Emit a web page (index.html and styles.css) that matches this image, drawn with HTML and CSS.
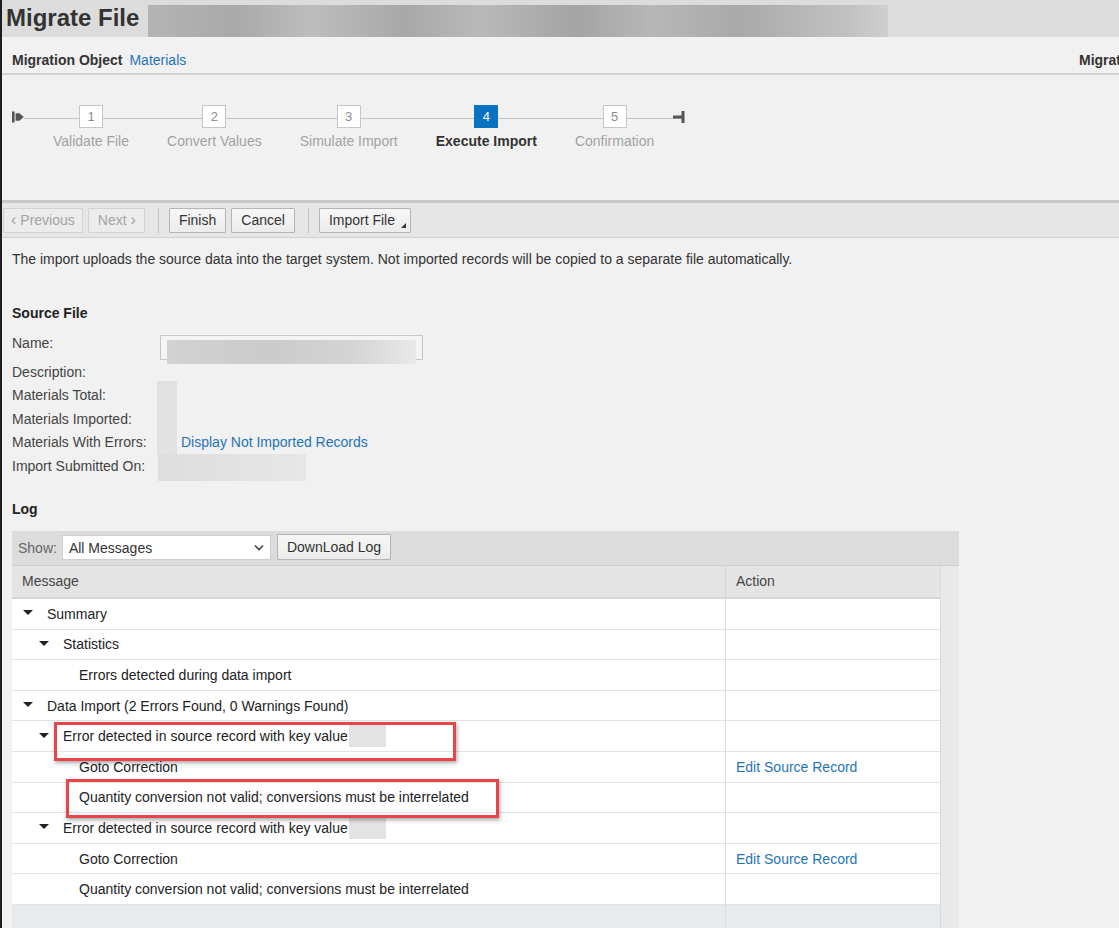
FILE: index.html
```html
<!DOCTYPE html>
<html>
<head>
<meta charset="utf-8">
<title>Migrate File</title>
<link rel="stylesheet" href="styles.css">
</head>
<body>
<div class="page">
  <header class="titlebar">
    <h1 class="title">Migrate File</h1>
    <div class="blur-title"></div>
  </header>
  <div class="objbar">
    <div class="obj-left"><span class="obj-label">Migration Object</span><a class="link">Materials</a></div>
    <span class="obj-right">Migrat</span>
  </div>

  <div class="roadmap">
    <div class="track">
      <span class="rm-start">
        <svg width="12" height="12" viewBox="0 0 12 12"><rect x="0" y="0.5" width="2.6" height="11" fill="#555"/><path d="M3.6 2.2 H7.4 L11.8 6 L7.4 9.8 H3.6 Z" fill="#555"/></svg>
      </span>
      <div class="step"><div class="box">1</div><div class="lbl">Validate File</div></div>
      <div class="step"><div class="box">2</div><div class="lbl">Convert Values</div></div>
      <div class="step"><div class="box">3</div><div class="lbl">Simulate Import</div></div>
      <div class="step active"><div class="box">4</div><div class="lbl">Execute Import</div></div>
      <div class="step"><div class="box">5</div><div class="lbl">Confirmation</div></div>
      <span class="rm-end">
        <svg width="12" height="14" viewBox="0 0 12 14"><rect x="0" y="5.5" width="9" height="3" fill="#555"/><rect x="8.5" y="1" width="3" height="12" fill="#555"/></svg>
      </span>
    </div>
  </div>

  <div class="toolbar">
    <button class="btn disabled"><span class="chev">&#8249;</span> Previous</button>
    <button class="btn disabled next">Next <span class="chev">&#8250;</span></button>
    <span class="sep"></span>
    <button class="btn">Finish</button>
    <button class="btn">Cancel</button>
    <span class="sep"></span>
    <button class="btn menu">Import File<span class="menu-tri"></span></button>
  </div>

  <main class="content">
    <p class="intro">The import uploads the source data into the target system. Not imported records will be copied to a separate file automatically.</p>

    <h2 class="section">Source File</h2>
    <div class="form">
      <div class="f-label name-l">Name:</div>
      <div class="f-val"><div class="input-blur"><span class="inner-blur"></span></div></div>
      <div class="f-label">Description:</div>
      <div class="f-val"><span class="vblur top"></span></div>
      <div class="f-label">Materials Total:</div>
      <div class="f-val"><span class="vblur"></span></div>
      <div class="f-label">Materials Imported:</div>
      <div class="f-val"><span class="vblur"></span></div>
      <div class="f-label">Materials With Errors:</div>
      <div class="f-val"><span class="vblur"></span><a class="link records">Display Not Imported Records</a></div>
      <div class="f-label">Import Submitted On:</div>
      <div class="f-val"><span class="wide-blur"></span></div>
    </div>

    <h2 class="section log-h">Log</h2>
    <div class="logpanel">
      <div class="logbar">
        <span class="show">Show:</span>
        <div class="select"><span>All Messages</span>
          <svg width="10" height="7" viewBox="0 0 10 7"><path d="M1 1.5 L5 5.5 L9 1.5" stroke="#444" stroke-width="1.6" fill="none"/></svg>
        </div>
        <button class="btn dl">DownLoad Log</button>
      </div>
      <div class="tablewrap">
        <div class="table">
          <div class="thead"><div class="c1">Message</div><div class="c2">Action</div></div>
          <div class="tbody">
            <div class="row"><div class="c1 l0"><span class="tri"></span>Summary</div><div class="c2"></div></div>
            <div class="row"><div class="c1 l1"><span class="tri"></span>Statistics</div><div class="c2"></div></div>
            <div class="row"><div class="c1 l2">Errors detected during data import</div><div class="c2"></div></div>
            <div class="row"><div class="c1 l0"><span class="tri"></span>Data Import (2 Errors Found, 0 Warnings Found)</div><div class="c2"></div></div>
            <div class="row"><div class="c1 l1"><span class="tri"></span>Error detected in source record with key value<span class="keyblur"></span></div><div class="c2"></div></div>
            <div class="row"><div class="c1 l2">Goto Correction</div><div class="c2"><a class="link">Edit Source Record</a></div></div>
            <div class="row"><div class="c1 l2">Quantity conversion not valid; conversions must be interrelated</div><div class="c2"></div></div>
            <div class="row"><div class="c1 l1"><span class="tri"></span>Error detected in source record with key value<span class="keyblur"></span></div><div class="c2"></div></div>
            <div class="row"><div class="c1 l2">Goto Correction</div><div class="c2"><a class="link">Edit Source Record</a></div></div>
            <div class="row"><div class="c1 l2">Quantity conversion not valid; conversions must be interrelated</div><div class="c2"></div></div>
            <div class="row empty"><div class="c1"></div><div class="c2"></div></div>
            <div class="hl hl1"></div>
            <div class="hl hl2"></div>
          </div>
        </div>
        <div class="vscroll"></div>
      </div>
    </div>
  </main>
</div>
</body>
</html>
```

FILE: styles.css
```css
* { box-sizing: border-box; }
html, body { margin: 0; padding: 0; }
body {
  font-family: "Liberation Sans", Arial, sans-serif;
  font-size: 14px;
  color: #333;
  background: #f0f0f0;
  overflow: hidden;
}
.page {
  border-left: 2px solid #1e1e1e;
  min-height: 928px;
  background: #f1f1f1;
}
.link { color: #1f74b8; text-decoration: none; }

/* title */
.titlebar {
  height: 37px;
  background: #dcdcdc;
  display: flex;
  align-items: flex-end;
}
.title {
  margin: 0 0 5px 4px;
  font-size: 24px;
  font-weight: bold;
  color: #333;
  line-height: 28px;
}
.blur-title {
  margin-left: 9px;
  width: 740px;
  height: 32px;
  background: linear-gradient(90deg, #b4b4b4 0%, #a9a9a9 12%, #bdbdbd 22%, #a8a8a8 35%, #b9b9b9 45%, #a4a4a4 58%, #b7b7b7 68%, #a9a9a9 80%, #c2c2c2 95%, #cfcfcf 100%);
}
.objbar {
  height: 38px;
  display: grid;
  grid-template-columns: 1fr auto;
  align-items: start;
  padding: 15px 0 0 10px;
  border-bottom: 2px solid #d3d3d3;
  overflow: hidden;
  line-height: 16px;
}
.obj-left { display: flex; gap: 7px; align-items: center; }
.obj-label, .obj-right { font-weight: bold; color: #333; }
.obj-right { margin-right: -2px; }

/* roadmap */
.roadmap {
  height: 128px;
  padding: 30px 0 0 10px;
  border-bottom: 3px solid #c9c9c9;
}
.track {
  display: inline-flex;
  align-items: flex-start;
  background: linear-gradient(#c4c4c4, #c4c4c4) no-repeat 0 13px / 100% 1px;
}
.rm-start { width: 12px; height: 23px; margin-right: 10px; display: flex; align-items: center; background: #f1f1f1; }
.rm-end { width: 12px; height: 23px; display: flex; align-items: center; }
.step {
  padding: 0 19px;
  display: flex;
  flex-direction: column;
  align-items: center;
}
.box {
  width: 24px;
  height: 23px;
  background: #fff;
  border: 1px solid #c6c6c6;
  color: #8c8c8c;
  font-size: 13px;
  display: flex;
  align-items: center;
  justify-content: center;
}
.lbl { margin-top: 5px; line-height: 16px; color: #a2a2a2; white-space: nowrap; }
.step.active .box { background: #0a72c0; border-color: #0a72c0; color: #fff; }
.step.active .lbl { color: #333; font-weight: bold; }

/* toolbar */
.toolbar {
  height: 35px;
  background: #e6e6e6;
  border-bottom: 1px solid #d0d0d0;
  display: flex;
  align-items: center;
  padding-left: 1px;
}
.btn {
  font-family: inherit;
  font-size: 14px;
  color: #333;
  height: 25px;
  padding: 0 9px;
  background: linear-gradient(#f6f6f6, #ececec);
  border: 1px solid #b5b5b5;
  border-radius: 1px;
  margin-right: 5px;
  display: inline-flex;
  align-items: center;
  gap: 4px;
}
.btn.disabled { color: #a3a3a3; border-color: #d2d2d2; background: #ececec; padding: 0 7px; }
.btn.disabled.next { padding: 0 8px 0 9px; }
.chev { font-size: 16px; line-height: 14px; }
.sep { width: 1px; height: 25px; background: #c4c4c4; margin: 0 10px 0 8px; }
.btn.menu { position: relative; padding-right: 15px; }
.menu-tri {
  position: absolute;
  right: 4px;
  bottom: 4px;
  width: 0; height: 0;
  border-left: 5px solid transparent;
  border-bottom: 5px solid #333;
}

/* content */
.content { padding-left: 10px; }
.intro { margin: 13px 0 0; line-height: 16px; color: #333; }
.section { font-size: 14px; font-weight: bold; color: #222; margin: 38px 0 0; line-height: 16px; }
.form {
  margin-top: 14px;
  display: grid;
  grid-template-columns: 145px 1fr;
  grid-template-rows: 26px repeat(5, 23.4px);
}
.f-label { color: #444; line-height: 23px; white-space: nowrap; }
.f-label.name-l { line-height: 16px; }
.f-val { display: flex; align-items: stretch; position: relative; }
.input-blur {
  margin-left: 3px;
  width: 263px;
  height: 25px;
  border: 1px solid #c6c6c6;
  background: #f4f4f4;
  padding: 4px 6px 0 6px;
}
.inner-blur {
  display: block;
  height: 24px;
  background: linear-gradient(90deg, #d2d2d2, #cbcbcb 40%, #d4d4d4 75%, #e9e9e9);
}
.vblur { width: 20px; background: #e2e2e2; }
.vblur.top { margin-top: 20px; }
.records { margin-left: 4px; line-height: 23px; }
.wide-blur { margin-left: 1px; width: 148px; height: 27px; background: linear-gradient(90deg, #dedede, #e2e2e2 50%, #e7e7e7); margin-top: -1px; }
.log-h { margin-top: 23px; line-height: 16px; }

/* log */
.logpanel { margin-top: 14px; width: 947px; background: #dcdcdc; }
.logbar {
  height: 35px;
  display: flex;
  align-items: center;
  padding-left: 6px;
  border-bottom: 1px solid #cfcfcf;
}
.show { color: #666; margin-right: 5px; }
.select {
  width: 209px;
  height: 25px;
  background: #fff;
  border: 1px solid #cfcfcf;
  display: flex;
  align-items: center;
  justify-content: space-between;
  padding: 0 6px 0 6px;
  color: #333;
  margin-right: 6px;
}
.btn.dl { height: 26px; padding: 0 9px; margin-top: -1px; }
.tablewrap { display: flex; background: #f1f1f1; }
.table { width: 928px; }
.vscroll { width: 19px; background: #e9e9e9; border-left: 1px solid #dadada; }
.thead {
  display: grid;
  grid-template-columns: 714px 1fr;
  height: 33px;
  background: #e4e4e4;
  border-bottom: 2px solid #d6d6d6;
  color: #444;
}
.thead .c1, .thead .c2 { padding-left: 10px; display: flex; align-items: center; }
.thead .c1 { border-right: 1px solid #d4d4d4; }
.tbody { position: relative; }
.row {
  display: grid;
  grid-template-columns: 714px 1fr;
  height: 30.6px;
  background: #fff;
  border-bottom: 1px solid #e3e3e3;
  color: #222;
}
.row .c1 { border-right: 1px solid #dcdcdc; display: flex; align-items: center; white-space: nowrap; }
.row .c2 { display: flex; align-items: center; padding-left: 10px; }
.row.empty { background: #e8ebee; height: 30px; border-bottom: none; }
.l0 { padding-left: 11px; }
.l1 { padding-left: 27px; }
.l2 { padding-left: 67px; }
.tri {
  width: 0; height: 0;
  border-left: 5px solid transparent;
  border-right: 5px solid transparent;
  border-top: 5px solid #222;
  margin-right: 14px;
  margin-top: -2px;
}
.keyblur { display: inline-block; width: 37px; height: 22px; background: #e3e3e3; margin-left: 1px; }
.hl {
  position: absolute;
  border: 3px solid #e8454a;
  box-shadow: 1px 2px 4px rgba(0, 0, 0, 0.35);
}
.hl1 { left: 42px; top: 123px; width: 402px; height: 39px; }
.hl2 { left: 54px; top: 180px; width: 433px; height: 39px; }
```
